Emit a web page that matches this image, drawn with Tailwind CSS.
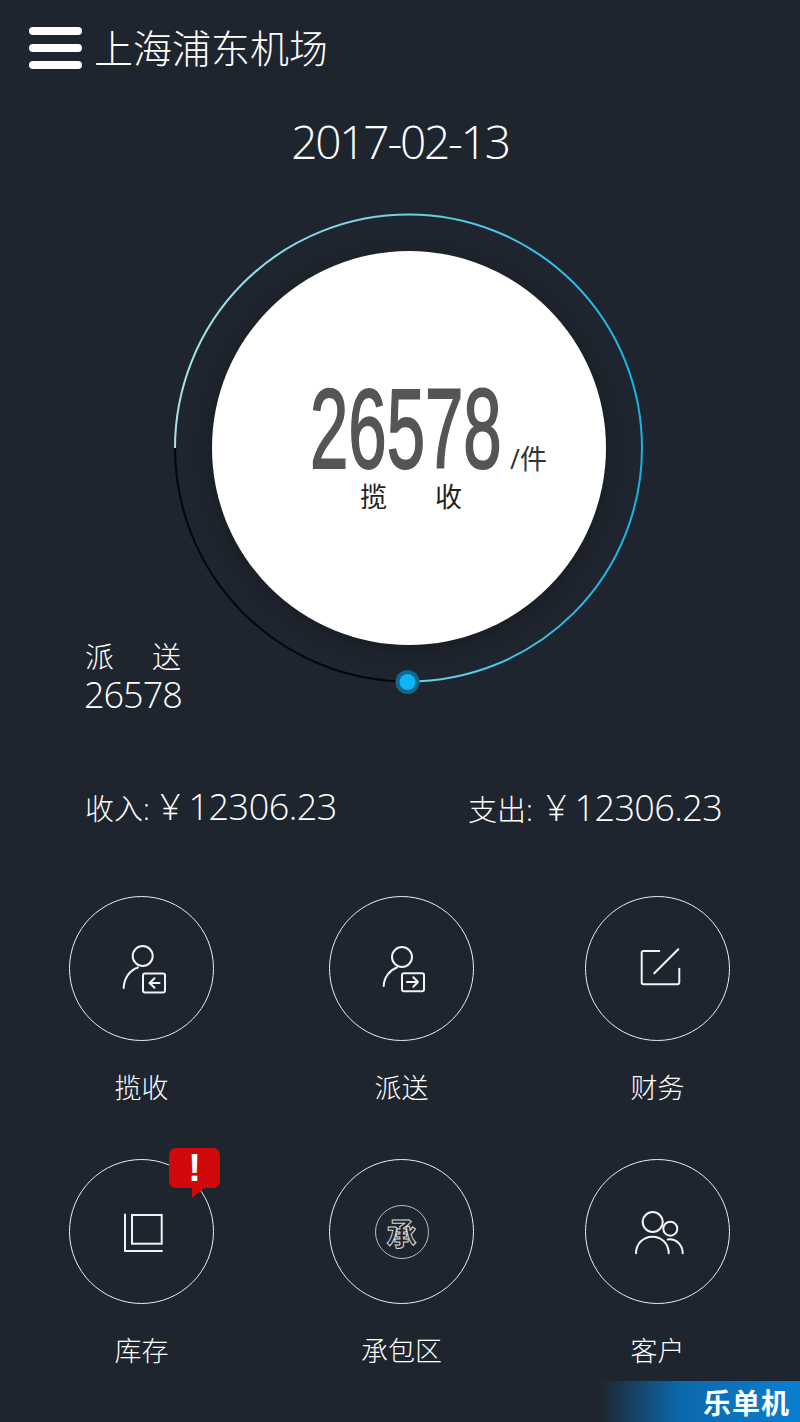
<!DOCTYPE html>
<html lang="zh-CN">
<head>
  <meta charset="UTF-8">
  <meta name="viewport" content="width=device-width, initial-scale=1.0">
  <title>上海浦东机场</title>
  <script src="https://cdn.jsdelivr.net/npm/@tailwindcss/browser@4"></script>
</head>
<body class="bg-[#1f252e] text-white font-['Open_Sans','Noto_Sans_CJK_SC',sans-serif] font-light">
  <div class="relative w-[800px] h-[1422px] overflow-hidden">

    <!-- header -->
    <header class="flex items-center h-[96px] pl-[29px]">
      <div class="flex flex-col gap-[9px] w-[53px]">
        <span class="block h-[8px] rounded-full bg-white"></span>
        <span class="block h-[8px] rounded-full bg-white"></span>
        <span class="block h-[8px] rounded-full bg-white"></span>
      </div>
      <h1 class="ml-[12px] text-[39px] leading-[48px] font-light">上海浦东机场</h1>
    </header>

    <p class="text-center text-[46px] leading-[60px] h-[60px] mt-[15px] tracking-[-2.2px]">2017-02-13</p>

    <!-- ring -->
    <section class="relative ml-[168px] mt-[37px] w-[480px] h-[480px]">
      <svg class="overflow-visible" width="480" height="480" viewBox="0 0 480 480" fill="none">
        <defs>
          <linearGradient id="arc" x1="0" y1="0" x2="1" y2="0">
            <stop offset="0" stop-color="#a8e2e8"/>
            <stop offset="0.5" stop-color="#6fd0e6"/>
            <stop offset="1" stop-color="#14b2e6"/>
          </linearGradient>
        </defs>
        <path d="M7 240 A233.5 233.5 0 0 0 240 473.5" stroke="#04060a" stroke-width="2"/>
        <path d="M7 240 A233.5 233.5 0 1 1 240 473.5" stroke="url(#arc)" stroke-width="2"/>
        <circle cx="239.5" cy="474" r="12" fill="#12678f"/>
        <circle cx="239.5" cy="474" r="8" fill="#0cb6f6"/>
      </svg>
      <div class="absolute left-[44px] top-[43px] w-[394px] h-[394px] rounded-full bg-white shadow-[0_4px_20px_rgba(0,0,0,0.25)]">
        <div class="flex items-end pl-[98px] pt-[121px] h-[235px]">
          <div class="w-[190px] h-[114px] text-[#555555] text-[113px] leading-[114px] font-normal [-webkit-text-stroke:2px_#555555] font-['Liberation_Sans',sans-serif]">
            <span class="inline-block origin-left scale-x-[0.61] whitespace-nowrap">26578</span>
          </div>
          <span class="ml-[10px] mb-[11px] text-[#333333] text-[27px] leading-[32px] font-normal">/件</span>
        </div>
        <div class="flex justify-between w-[102px] ml-[148px] mt-[-6px] text-[#222222] text-[27px] leading-[34px] font-normal">
          <span>揽</span><span>收</span>
        </div>
      </div>
    </section>

    <!-- delivery -->
    <div class="-mt-[50px] ml-[85px] w-[96px]">
      <div class="flex justify-between text-[29px] leading-[38px]"><span>派</span><span>送</span></div>
      <div class="-ml-[1px] text-[36px] leading-[38px] tracking-[-1px] whitespace-nowrap">26578</div>
    </div>

    <!-- income / spending -->
    <div class="flex mt-[70px] h-[46px] text-[29px] leading-[46px]">
      <div class="ml-[85px] w-[383px] flex items-baseline whitespace-nowrap">收入:<span class="ml-[10px] text-[36px]">¥</span><span class="ml-[8px] text-[36px] tracking-[-0.5px]">12306.23</span></div>
      <div class="mt-[1px] flex items-baseline whitespace-nowrap">支出:<span class="ml-[13px] text-[36px]">¥</span><span class="ml-[8px] text-[36px] tracking-[-0.6px]">12306.23</span></div>
    </div>

    <!-- menu -->
    <div class="grid grid-cols-[260px_256px_145px] grid-rows-[263px_200px] mt-[66px] ml-[69px] text-[27px] leading-[36px]">

      <div class="w-[145px]">
        <div class="flex items-center justify-center w-[145px] h-[145px] rounded-full border-[1.5px] border-[#eceef0]">
          <svg width="64" height="64" viewBox="0 0 64 64" fill="none" stroke="#f2f3f4" stroke-width="2" stroke-linecap="round" stroke-linejoin="round">
            <circle cx="32.7" cy="19" r="10"/>
            <path d="M13.7 51 C14 41 20 33 28 30.5"/>
            <rect x="33" y="36.5" width="22" height="19" rx="2"/>
            <path d="M49.5 46 H39.5 M44.5 41.3 L39.5 46 L44.5 50.7"/>
          </svg>
        </div>
        <p class="mt-[29px] text-center">揽收</p>
      </div>

      <div class="w-[145px]">
        <div class="flex items-center justify-center w-[145px] h-[145px] rounded-full border-[1.5px] border-[#eceef0]">
          <svg width="64" height="64" viewBox="0 0 64 64" fill="none" stroke="#f2f3f4" stroke-width="2" stroke-linecap="round" stroke-linejoin="round">
            <circle cx="32" cy="20" r="10"/>
            <path d="M13.7 49 C14 40 20 33 27 30.5"/>
            <rect x="32" y="36.3" width="22" height="18" rx="2"/>
            <path d="M37 45 H48 M43.3 40.3 L48 45 L43.3 49.7"/>
          </svg>
        </div>
        <p class="mt-[29px] text-center">派送</p>
      </div>

      <div class="w-[145px]">
        <div class="flex items-center justify-center w-[145px] h-[145px] rounded-full border-[1.5px] border-[#eceef0]">
          <svg width="64" height="64" viewBox="0 0 64 64" fill="none" stroke="#f2f3f4" stroke-width="2" stroke-linecap="round" stroke-linejoin="round">
            <path d="M33.3 14 H17.5 A1.8 1.8 0 0 0 15.7 15.8 V45.5 A1.8 1.8 0 0 0 17.5 47.3 H51.5 A1.8 1.8 0 0 0 53.3 45.5 V31.7"/>
            <path d="M28.3 36.3 L52.3 12.3"/>
          </svg>
        </div>
        <p class="mt-[29px] text-center">财务</p>
      </div>

      <div class="relative w-[145px]">
        <div class="flex items-center justify-center w-[145px] h-[145px] rounded-full border-[1.5px] border-[#eceef0]">
          <svg width="64" height="64" viewBox="0 0 64 64" fill="none" stroke="#f2f3f4" stroke-width="2">
            <rect x="22" y="15" width="29.7" height="28.7"/>
            <path d="M15 13.7 V51 H52.7"/>
          </svg>
        </div>
        <p class="mt-[29px] text-center">库存</p>
        <!-- alert badge -->
        <div class="absolute left-[100px] -top-[11px] w-[51px] h-[40px] rounded-[7px] bg-[#d00a0c] flex items-center justify-center">
          <span class="text-white text-[38px] leading-none font-bold font-['Liberation_Sans',sans-serif]">!</span>
          <span class="absolute left-[23px] top-[39px] w-0 h-0 border-t-[11px] border-t-[#d00a0c] border-r-[13px] border-r-transparent"></span>
        </div>
      </div>

      <div class="w-[145px]">
        <div class="flex items-center justify-center w-[145px] h-[145px] rounded-full border-[1.5px] border-[#eceef0]">
          <div class="flex items-center justify-center w-[54px] h-[54px] rounded-full border-[1.5px] border-[#b9bcc0]">
            <span class="text-[30px] leading-none font-bold text-[#1f252e] [-webkit-text-stroke:1px_#d8dadc] font-['Noto_Sans_CJK_SC',sans-serif]">承</span>
          </div>
        </div>
        <p class="mt-[29px] text-center">承包区</p>
      </div>

      <div class="w-[145px]">
        <div class="flex items-center justify-center w-[145px] h-[145px] rounded-full border-[1.5px] border-[#eceef0]">
          <svg width="64" height="64" viewBox="0 0 64 64" fill="none" stroke="#f2f3f4" stroke-width="2" stroke-linecap="round">
            <circle cx="26.7" cy="22" r="10"/>
            <circle cx="44.3" cy="28.7" r="7"/>
            <path d="M10 53.3 C10 44 17 36.7 26.4 36.7 C36 36.7 42.7 44 42.7 53.3"/>
            <path d="M41.7 39.5 C50 38 56.7 45 56.7 53.3"/>
          </svg>
        </div>
        <p class="mt-[29px] text-center">客户</p>
      </div>
    </div>

    <!-- watermark -->
    <div class="absolute right-0 bottom-0 w-[200px] h-[41px] bg-gradient-to-r from-transparent via-[#0c68ad] via-40% to-[#0a7fd0] flex items-center justify-end pr-[10px]">
      <span class="text-white text-[28px] leading-none font-bold tracking-[1px] font-['Noto_Sans_CJK_SC',sans-serif]">乐单机</span>
    </div>
  </div>
</body>
</html>
